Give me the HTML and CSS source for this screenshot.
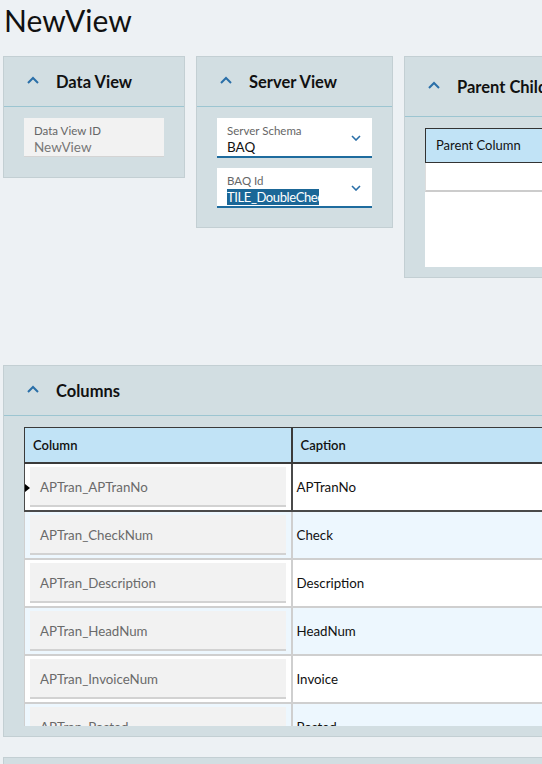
FILE: index.html
```html
<!DOCTYPE html>
<html lang="en">
<head>
    <meta charset="UTF-8">
    <meta name="viewport" content="width=device-width, initial-scale=1.0">
    <title>NewView</title>
    <link rel="stylesheet" href="styles.css">
</head>
<body>
    <div class="page">
        <h1 class="title">NewView</h1>

        <div class="panel-row">
            <!-- Data View -->
            <div class="panel panel-data">
                <div class="panel-head">
                    <svg class="chev" width="12" height="8" viewBox="0 0 12 8"><path d="M1 7 L6 2 L11 7" fill="none" stroke="#2a6fa8" stroke-width="2"/></svg>
                    <span class="panel-title">Data View</span>
                </div>
                <div class="panel-body">
                    <div class="field readonly">
                        <div class="field-label">Data View ID</div>
                        <div class="field-value">NewView</div>
                    </div>
                </div>
            </div>

            <!-- Server View -->
            <div class="panel panel-server">
                <div class="panel-head">
                    <svg class="chev" width="12" height="8" viewBox="0 0 12 8"><path d="M1 7 L6 2 L11 7" fill="none" stroke="#2a6fa8" stroke-width="2"/></svg>
                    <span class="panel-title">Server View</span>
                </div>
                <div class="panel-body stack">
                    <div class="field combo">
                        <div class="field-label">Server Schema</div>
                        <div class="field-value">BAQ</div>
                        <svg class="drop" width="10" height="6" viewBox="0 0 10 6"><path d="M1 1 L5 5 L9 1" fill="none" stroke="#2a6fa8" stroke-width="1.6"/></svg>
                    </div>
                    <div class="field combo">
                        <div class="field-label">BAQ Id</div>
                        <div class="field-value"><span class="selected">TILE_DoubleCheck</span></div>
                        <svg class="drop" width="10" height="6" viewBox="0 0 10 6"><path d="M1 1 L5 5 L9 1" fill="none" stroke="#2a6fa8" stroke-width="1.6"/></svg>
                    </div>
                </div>
            </div>

            <!-- Parent Child -->
            <div class="panel panel-parent">
                <div class="panel-head tall">
                    <svg class="chev" width="12" height="8" viewBox="0 0 12 8"><path d="M1 7 L6 2 L11 7" fill="none" stroke="#2a6fa8" stroke-width="2"/></svg>
                    <span class="panel-title">Parent Child Relations</span>
                </div>
                <div class="panel-body">
                    <div class="mini-grid">
                        <div class="grid-head">Parent Column</div>
                        <div class="empty-row"></div>
                        <div class="empty-area"></div>
                    </div>
                </div>
            </div>
        </div>

        <!-- Columns -->
        <div class="panel panel-columns">
            <div class="panel-head">
                <svg class="chev" width="12" height="8" viewBox="0 0 12 8"><path d="M1 7 L6 2 L11 7" fill="none" stroke="#2a6fa8" stroke-width="2"/></svg>
                <span class="panel-title">Columns</span>
            </div>
            <div class="panel-body">
                <div class="grid-wrap">
                    <table class="grid">
                        <thead>
                            <tr><th class="col-name">Column</th><th>Caption</th></tr>
                        </thead>
                        <tbody>
                            <tr class="current">
                                <td class="col-name"><span class="row-mark"></span><div class="cell-box">APTran_APTranNo</div></td>
                                <td>APTranNo</td>
                            </tr>
                            <tr class="alt">
                                <td class="col-name"><div class="cell-box">APTran_CheckNum</div></td>
                                <td>Check</td>
                            </tr>
                            <tr>
                                <td class="col-name"><div class="cell-box">APTran_Description</div></td>
                                <td>Description</td>
                            </tr>
                            <tr class="alt">
                                <td class="col-name"><div class="cell-box">APTran_HeadNum</div></td>
                                <td>HeadNum</td>
                            </tr>
                            <tr>
                                <td class="col-name"><div class="cell-box">APTran_InvoiceNum</div></td>
                                <td>Invoice</td>
                            </tr>
                            <tr class="alt">
                                <td class="col-name"><div class="cell-box">APTran_Posted</div></td>
                                <td>Posted</td>
                            </tr>
                        </tbody>
                    </table>
                </div>
            </div>
        </div>

        <div class="panel panel-next"></div>
    </div>
</body>
</html>
```

FILE: styles.css
```css
body {
    margin: 0;
    background-color: #edf1f4;
    font-family: Lato, "Open Sans", sans-serif;
    color: #111;
    overflow: hidden;
}
.page {
    width: 760px;
    padding-left: 3px;
}
.title {
    font-size: 30px;
    font-weight: normal;
    line-height: 40px;
    margin: 0 0 16px 1px;
    color: #111;
}

/* パネル */
.panel-row {
    display: flex;
    align-items: flex-start;
    gap: 11px;
}
.panel {
    background-color: #d2dee2;
    border: 1px solid #c3cfd3;
    box-sizing: border-box;
}
.panel-head {
    height: 50px;
    border-bottom: 1px solid #9cc5d1;
    box-sizing: border-box;
    display: flex;
    align-items: center;
    padding-left: 23px;
}
.panel-head.tall {
    height: 60px;
}
.chev {
    display: block;
    margin-top: -4px;
}
.panel-title {
    font-size: 16.5px;
    font-weight: bold;
    margin-left: 17px;
    white-space: nowrap;
}
.panel-body {
    padding: 11px 20px 20px 20px;
}
.panel-body.stack {
    display: flex;
    flex-direction: column;
    gap: 10px;
}
.panel-data {
    width: 182px;
    height: 122px;
}
.panel-server {
    width: 197px;
    height: 172px;
}
.panel-parent {
    width: 300px;
    height: 222px;
}

/* 入力欄 */
.field {
    position: relative;
    box-sizing: border-box;
    height: 40px;
    padding: 6px 10px 0 10px;
}
.field.readonly {
    width: 140px;
    height: 39px;
    background-color: #f2f2f2;
    border-bottom: 1px solid #d4d4d4;
}
.field.combo {
    width: 155px;
    background-color: #fff;
    border-bottom: 2px solid #1e6c9e;
}
.field-label {
    font-size: 11.5px;
    line-height: 14px;
    color: #666;
}
.readonly .field-value {
    font-size: 13.5px;
    line-height: 18px;
    color: #777;
}
.combo .field-value {
    font-size: 13.5px;
    line-height: 18px;
    color: #111;
    white-space: nowrap;
    overflow: hidden;
    width: 92px;
}
.selected {
    background-color: #1b6797;
    color: #fff;
    letter-spacing: -0.4px;
    font-size: 13px;
}
.drop {
    position: absolute;
    right: 11px;
    top: 17px;
}

/* 親子グリッド */
.mini-grid {
    width: 400px;
    background-color: #fff;
}
.grid-head {
    height: 35px;
    box-sizing: border-box;
    border: 1px solid #333;
    background-color: #c1e3f6;
    font-size: 13px;
    line-height: 33px;
    padding-left: 10px;
}
.empty-row {
    height: 27px;
    border-bottom: 2px solid #ccc;
    border-left: 1px solid #ddd;
}
.empty-area {
    height: 75px;
}

/* 列グリッド */
.panel-columns {
    margin-top: 87px;
    width: 740px;
    height: 372px;
}
.panel-columns .panel-body {
    padding-bottom: 0;
}
.grid-wrap {
    height: 299px;
    overflow: hidden;
}
.grid {
    border-collapse: collapse;
    width: 600px;
    font-size: 13.3px;
}
.grid th {
    height: 35px;
    box-sizing: border-box;
    background-color: #c1e3f6;
    border: 2px solid #3a3a3a;
    border-top-width: 1px;
    font-size: 13px;
    font-weight: 600;
    text-align: left;
    padding: 0 0 0 8px;
}
.grid th.col-name {
    width: 267px;
    border-left-width: 1px;
}
.grid td {
    height: 48px;
    box-sizing: border-box;
    border: 2px solid #cfcfcf;
    background-color: #fff;
    padding: 0 0 0 4px;
    color: #111;
}
.grid tr.alt td {
    background-color: #edf7fe;
}
.grid td.col-name {
    position: relative;
    padding: 0 5px;
    border-left-width: 1px;
}
.grid tr.current td {
    border-color: #4a4a4a;
}
.cell-box {
    height: 40px;
    box-sizing: border-box;
    background-color: #f2f2f2;
    border-bottom: 2px solid #d2d2d2;
    color: #6a6a6a;
    line-height: 40px;
    padding-left: 10px;
}
.row-mark {
    position: absolute;
    left: 0;
    top: 20px;
    width: 0;
    height: 0;
    border-top: 4px solid transparent;
    border-bottom: 4px solid transparent;
    border-left: 5px solid #000;
}

.panel-next {
    margin-top: 20px;
    width: 740px;
    height: 40px;
}
```
